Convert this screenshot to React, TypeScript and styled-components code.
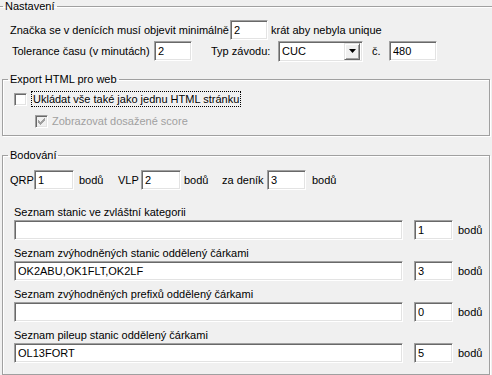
import React from 'react';
import styled, { createGlobalStyle } from 'styled-components';

const GlobalStyle = createGlobalStyle`
  html, body {
    margin: 0;
    padding: 0;
    background: #f0f0f0;
  }
  body {
    font-family: 'Liberation Sans', Arial, sans-serif;
    font-size: 11px;
    color: #000;
  }
`;

const Screen = styled.div`
  width: 492px;
  height: 375px;
  overflow: hidden;
  background: #f0f0f0;
`;

const Group = styled.fieldset<{ $mt?: number; $mx?: number }>`
  margin: ${p => p.$mt || 0}px ${p => p.$mx || 0}px 0;
  padding: 0;
  min-width: 0;
  border: 1px solid #a0a0a0;
  box-shadow: inset 1px 1px 0 #fff, 1px 1px 0 #fff;
`;

const Legend = styled.legend<{ $ml: number }>`
  margin-left: ${p => p.$ml}px;
  padding: 0 2px;
  line-height: 13px;
  font-size: 11px;
`;

const Body = styled.div<{ $pad: string }>`
  padding: ${p => p.$pad};
`;

const Row = styled.div<{ $mt?: number; $h?: number }>`
  display: flex;
  align-items: center;
  height: ${p => p.$h || 20}px;
  margin-top: ${p => p.$mt || 0}px;
`;

const Text = styled.span<{ $w?: number; $ml?: number; $disabled?: boolean }>`
  flex: none;
  width: ${p => (p.$w ? `${p.$w}px` : 'auto')};
  margin-left: ${p => p.$ml || 0}px;
  white-space: nowrap;
  color: ${p => (p.$disabled ? '#a0a0a0' : '#000')};
`;

const TextBox = styled.input<{ $w: number; $ml?: number }>`
  flex: none;
  box-sizing: border-box;
  width: ${p => p.$w}px;
  height: 20px;
  margin: 0 0 0 ${p => p.$ml || 0}px;
  padding: 0 3px;
  font: inherit;
  color: #000;
  background: #fff;
  border: 1px solid;
  border-color: #a0a0a0 #fff #fff #a0a0a0;
  box-shadow: inset 1px 1px 0 #696969, inset -1px -1px 0 #e3e3e3;
  outline: none;
`;

const Combo = styled.div<{ $w: number; $ml?: number }>`
  flex: none;
  box-sizing: border-box;
  display: flex;
  align-items: center;
  justify-content: space-between;
  width: ${p => p.$w}px;
  height: 21px;
  margin-left: ${p => p.$ml || 0}px;
  padding: 2px 2px 2px 3px;
  background: #fff;
  border: 1px solid;
  border-color: #a0a0a0 #fff #fff #a0a0a0;
  box-shadow: inset 1px 1px 0 #696969, inset -1px -1px 0 #e3e3e3;
`;

const DropButton = styled.div`
  box-sizing: border-box;
  display: flex;
  align-items: center;
  justify-content: center;
  width: 16px;
  height: 17px;
  background: #f0f0f0;
  border: 1px solid;
  border-color: #e3e3e3 #696969 #696969 #e3e3e3;
  box-shadow: inset 1px 1px 0 #fff, inset -1px -1px 0 #a0a0a0;
`;

const CheckBox = styled.span<{ $ml: number; $disabled?: boolean }>`
  flex: none;
  box-sizing: border-box;
  display: flex;
  align-items: center;
  justify-content: center;
  width: 13px;
  height: 13px;
  margin-left: ${p => p.$ml}px;
  background: ${p => (p.$disabled ? '#f0f0f0' : '#fff')};
  border: 1px solid;
  border-color: #a0a0a0 #fff #fff #a0a0a0;
  box-shadow: inset 1px 1px 0 #696969, inset -1px -1px 0 #e3e3e3;
`;

const CheckLabel = styled.span<{ $ml: number; $focus?: boolean; $disabled?: boolean }>`
  box-sizing: border-box;
  height: 16px;
  line-height: 14px;
  margin-left: ${p => p.$ml}px;
  padding: 0 1px;
  border: 1px ${p => (p.$focus ? 'dotted #000' : 'solid transparent')};
  white-space: nowrap;
  color: ${p => (p.$disabled ? '#a0a0a0' : '#000')};
`;

const ListBlock = styled.div<{ $mt: number }>`
  margin: ${p => p.$mt}px 0 0 11px;
`;

const ListLabel = styled.div`
  height: 14px;
  line-height: 14px;
  white-space: nowrap;
`;

const Arrow = () => (
  <svg width="7" height="4" viewBox="0 0 7 4">
    <polygon points="0,0 7,0 3.5,4" fill="#000" />
  </svg>
);

const Check = () => (
  <svg width="7" height="7" viewBox="0 0 7 7" shapeRendering="crispEdges">
    <path d="M0 2h1v3h-1zM1 3h1v3h-1zM2 4h1v3h-1zM3 3h1v3h-1zM4 2h1v3h-1zM5 1h1v3h-1zM6 0h1v3h-1z" fill="#a0a0a0" />
  </svg>
);

const lists = [
  { label: 'Seznam stanic ve zvláštní kategorii', value: '', points: '1' },
  { label: 'Seznam zvýhodněných stanic oddělený čárkami', value: 'OK2ABU,OK1FLT,OK2LF', points: '3' },
  { label: 'Seznam zvýhodněných prefixů oddělený čárkami', value: '', points: '0' },
  { label: 'Seznam pileup stanic oddělený čárkami', value: 'OL13FORT', points: '5' },
];

const App: React.FC = () => {
  return (
    <Screen>
      <GlobalStyle />
      <Group $mx={-10}>
        <Legend $ml={12}>Nastavení</Legend>
        <Body $pad="7px 11px 20px">
          <Row>
            <Text $w={220} $ml={8}>Značka se v denících musí objevit minimálně</Text>
            <TextBox $w={38} defaultValue="2" />
            <Text $ml={3}>krát aby nebyla unique</Text>
          </Row>
          <Row $mt={1}>
            <Text $w={142} $ml={10}>Tolerance času (v minutách)</Text>
            <TextBox $w={38} defaultValue="2" />
            <Text $w={67} $ml={19}>Typ závodu:</Text>
            <Combo $w={85}>
              <span>CUC</span>
              <DropButton>
                <Arrow />
              </DropButton>
            </Combo>
            <Text $w={17} $ml={9}>č.</Text>
            <TextBox $w={48} defaultValue="480" />
          </Row>

          <Group $mt={12}>
            <Legend $ml={5}>Export HTML pro web</Legend>
            <Body $pad="5px 0 6px 11px">
              <Row $h={16}>
                <CheckBox $ml={0} />
                <CheckLabel $ml={4} $focus>Ukládat vše také jako jednu HTML stránku</CheckLabel>
              </Row>
              <Row $h={16} $mt={6}>
                <CheckBox $ml={21} $disabled>
                  <Check />
                </CheckBox>
                <CheckLabel $ml={2} $disabled>Zobrazovat dosažené score</CheckLabel>
              </Row>
            </Body>
          </Group>

          <Group $mt={13}>
            <Legend $ml={5}>Bodování</Legend>
            <Body $pad="8px 0 11px">
              <Row>
                <Text $w={24} $ml={7}>QRP</Text>
                <TextBox $w={40} defaultValue="1" />
                <Text $w={39} $ml={5}>bodů</Text>
                <Text $w={23}>VLP</Text>
                <TextBox $w={40} defaultValue="2" />
                <Text $w={38} $ml={3}>bodů</Text>
                <Text $w={45}>za deník</Text>
                <TextBox $w={39} defaultValue="3" />
                <Text $ml={6}>bodů</Text>
              </Row>
              {lists.map((item, i) => (
                <ListBlock key={item.label} $mt={i === 0 ? 15 : 6}>
                  <ListLabel>{item.label}</ListLabel>
                  <Row $mt={1}>
                    <TextBox $w={389} defaultValue={item.value} />
                    <TextBox $w={39} $ml={11} defaultValue={item.points} />
                    <Text $ml={5}>bodů</Text>
                  </Row>
                </ListBlock>
              ))}
            </Body>
          </Group>
        </Body>
      </Group>
    </Screen>
  );
};

export default App;
